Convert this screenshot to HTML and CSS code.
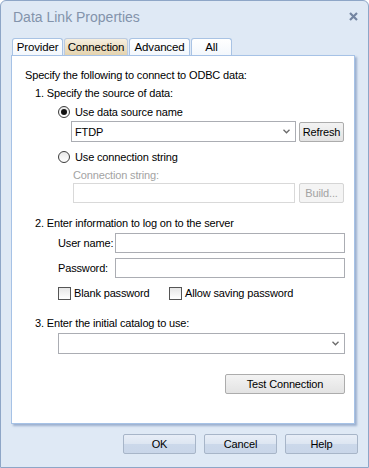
FILE: index.html
```html
<!DOCTYPE html>
<html lang="en">
<head>
    <meta charset="UTF-8">
    <title>Data Link Properties</title>
    <link rel="stylesheet" href="styles.css">
</head>
<body>
    <div class="window">
        <!-- Barra de título -->
        <div class="titlebar">
            <span class="title">Data Link Properties</span>
            <svg class="close" width="9" height="9" viewBox="0 0 9 9">
                <path d="M1 1 L8 8 M8 1 L1 8" stroke="#7485a1" stroke-width="2.2" fill="none"/>
            </svg>
        </div>

        <!-- Abas -->
        <div class="tabs">
            <div class="tab w-provider">Provider</div>
            <div class="tab w-connection active">Connection</div>
            <div class="tab w-advanced">Advanced</div>
            <div class="tab w-all">All</div>
        </div>

        <div class="panel">
            <div class="row r-intro">Specify the following to connect to ODBC data:</div>
            <div class="row step">1. Specify the source of data:</div>

            <label class="row option r-dsn"><span class="radio checked"></span>Use data source name</label>
            <div class="line r-dsnbox">
                <div class="combo wide"><span>FTDP</span>
                    <svg class="chev" width="7" height="5" viewBox="0 0 7 5"><path d="M0.5 0.8 L3.5 3.8 L6.5 0.8" stroke="#6a6a6a" stroke-width="1.3" fill="none"/></svg>
                </div>
                <button class="btn small">Refresh</button>
            </div>

            <label class="row option r-conn"><span class="radio"></span>Use connection string</label>
            <div class="row muted r-connlabel">Connection string:</div>
            <div class="line">
                <div class="field disabled connbox"></div>
                <button class="btn small disabled">Build...</button>
            </div>

            <div class="row step r-step2">2. Enter information to log on to the server</div>
            <div class="line login r-user">
                <span class="lbl">User name:</span>
                <div class="field grow"></div>
            </div>
            <div class="line login r-pass">
                <span class="lbl">Password:</span>
                <div class="field grow"></div>
            </div>
            <div class="row checks">
                <label class="check-item first"><span class="box"></span>Blank password</label>
                <label class="check-item"><span class="box"></span>Allow saving password</label>
            </div>

            <div class="row step r-step3">3. Enter the initial catalog to use:</div>
            <div class="line r-catalog">
                <div class="combo catalog">
                    <svg class="chev" width="7" height="5" viewBox="0 0 7 5"><path d="M0.5 0.8 L3.5 3.8 L6.5 0.8" stroke="#6a6a6a" stroke-width="1.3" fill="none"/></svg>
                </div>
            </div>

            <div class="line r-test">
                <button class="btn test">Test Connection</button>
            </div>
        </div>

        <!-- Botões do diálogo -->
        <div class="footer">
            <button class="dlg-btn">OK</button>
            <button class="dlg-btn">Cancel</button>
            <button class="dlg-btn">Help</button>
        </div>
    </div>
</body>
</html>
```

FILE: styles.css
```css
body {
    margin: 0;
    padding: 0;
    background-color: #ffffff;
    font-family: "Liberation Sans", Arial, sans-serif;
    font-size: 11px;
    letter-spacing: -0.15px;
    color: #000;
}

.window {
    width: 369px;
    height: 468px;
    box-sizing: border-box;
    border: 1px solid #8ea6c7;
    border-radius: 6px 6px 0 0;
    background-color: #dfe9f5;
}

.titlebar {
    height: 37px;
    display: flex;
    align-items: flex-start;
    justify-content: space-between;
    padding: 0 10px 0 12px;
    box-sizing: border-box;
}

.title {
    font-size: 14px;
    letter-spacing: 0;
    color: #8393ab;
    margin-top: 7px;
    line-height: 18px;
}

.close {
    margin-top: 11px;
}

/* Abas */
.tabs {
    display: flex;
    gap: 1px;
    margin-left: 11px;
    height: 17px;
}

.tab {
    box-sizing: border-box;
    height: 17px;
    border: 1px solid #a9c3e4;
    border-bottom: none;
    border-radius: 3px 3px 0 0;
    background: linear-gradient(#ffffff, #f3f7fc);
    text-align: center;
    line-height: 16px;
    font-size: 11.5px;
    color: #000;
}

.tab.active {
    background: linear-gradient(#f6efdf, #e4d3ae);
    border-color: #bccbe0;
}

.w-provider { width: 51px; }
.w-connection { width: 64px; }
.w-advanced { width: 61px; }
.w-all { width: 41px; }

.panel {
    margin-left: 10px;
    width: 344px;
    height: 369px;
    box-sizing: border-box;
    border: 1px solid #a6c2e6;
    background-color: #fff;
    box-shadow: 2px 2px 2px rgba(90, 120, 170, 0.5);
    padding: 11px 9px 0 13px;
}

.row {
    height: 16px;
    line-height: 16px;
    white-space: nowrap;
}

.line {
    display: flex;
    align-items: center;
    gap: 3px;
    padding-left: 46px;
}

.step {
    margin-left: 10px;
    margin-top: 2px;
}

.option {
    display: flex;
    align-items: center;
    margin-left: 33px;
}

.r-dsn { margin-top: 3px; }
.r-dsnbox { margin-top: 1px; }
.r-conn { margin-top: 7px; }
.r-connlabel { margin-top: 2px; margin-left: 48px; }
.r-step2 { margin-top: 12px; }
.r-user { margin-top: 2px; }
.r-pass { margin-top: 5px; }
.r-step3 { margin-top: 14px; }
.r-catalog { margin-top: 2px; }
.r-test { margin-top: 20px; justify-content: flex-end; }

.muted {
    color: #a3a3a3;
}

.radio {
    width: 12px;
    height: 12px;
    box-sizing: border-box;
    border: 1px solid #3c3c3c;
    border-radius: 50%;
    background: linear-gradient(#e8e8e8, #ffffff);
    margin-right: 5px;
    display: flex;
    align-items: center;
    justify-content: center;
}

.radio.checked::after {
    content: "";
    width: 6px;
    height: 6px;
    border-radius: 50%;
    background-color: #111;
}

.combo {
    box-sizing: border-box;
    height: 21px;
    border: 1px solid #abadb3;
    background-color: #fff;
    display: flex;
    align-items: center;
    padding: 0 5px 0 3px;
}

.chev {
    margin-left: auto;
}

.combo.wide {
    width: 225px;
}

.combo.catalog {
    width: 287px;
    margin-left: -13px;
}

.field {
    box-sizing: border-box;
    height: 20px;
    border: 1px solid #abadb3;
    background-color: #fff;
}

.field.disabled {
    border-color: #d9d9d9;
}

.connbox {
    width: 222px;
    margin-left: 2px;
    margin-right: 1px;
}

.btn {
    font-family: inherit;
    font-size: 11px;
    letter-spacing: -0.15px;
    box-sizing: border-box;
    height: 20px;
    border: 1px solid #acacac;
    border-radius: 2px;
    background: linear-gradient(#f3f3f3, #e3e3e3);
    color: #000;
    padding: 0;
}

.btn.small {
    width: 45px;
}

.btn.disabled {
    border-color: #d5d5d5;
    background: #f4f4f4;
    color: #a3a3a3;
}

.btn.test {
    width: 120px;
}

.login {
    padding-left: 33px;
    gap: 0;
}

.lbl {
    width: 57px;
}

.grow {
    width: 230px;
}

.checks {
    display: flex;
    margin-top: 7px;
    margin-left: 33px;
}

.check-item {
    display: flex;
    align-items: center;
}

.check-item.first {
    width: 111px;
}

.box {
    width: 13px;
    height: 13px;
    box-sizing: border-box;
    border: 1px solid #555;
    background: linear-gradient(#e6e6e6, #fff);
    margin-right: 3px;
}

/* Rodapé */
.footer {
    display: flex;
    justify-content: flex-end;
    gap: 8px;
    padding-right: 10px;
    margin-top: 10px;
}

.dlg-btn {
    font-family: inherit;
    font-size: 11px;
    letter-spacing: -0.15px;
    width: 73px;
    height: 20px;
    box-sizing: border-box;
    border: 1px solid #a7b5c8;
    border-radius: 2px;
    background: linear-gradient(#e8eef7 0%, #dde6f2 48%, #cbd8ea 52%, #c9d6e9 100%);
    color: #000;
    padding: 0;
}
```
